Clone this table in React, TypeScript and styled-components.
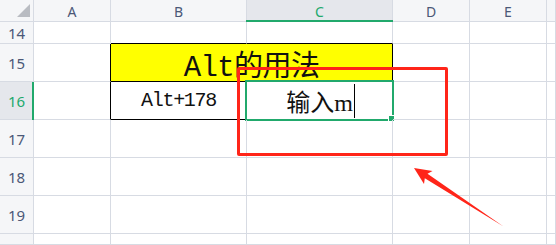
import React from "react";
import styled, { createGlobalStyle } from "styled-components";

const GRID = "#d7dbe3";
const GREEN = "#21a96c";
const RED = "#ff2519";

const GlobalStyles = createGlobalStyle`
  html, body {
    margin: 0;
    padding: 0;
    background: #ffffff;
    overflow: hidden;
  }
`;

const Sheet = styled.div`
  position: relative;
  width: 556px;
  height: 245px;
  display: grid;
  grid-template-columns: 34px 77px 136px 146px 77px 77px 1fr;
  grid-template-rows: 22px 22px 38px 38px 38px 38px 38px 1fr;
  overflow: hidden;
`;

const Cell = styled.div<{ $right?: string; $bottom?: string; $span?: number }>`
  box-sizing: border-box;
  border-right: 1px solid ${({ $right }) => $right || GRID};
  border-bottom: 1px solid ${({ $bottom }) => $bottom || GRID};
  grid-column: span ${({ $span }) => $span || 1};
  display: flex;
  align-items: center;
  justify-content: center;
  position: relative;
`;

const Head = styled(Cell)<{ $active?: boolean }>`
  background: ${({ $active }) => ($active ? "#e5e7ec" : "#f5f6f8")};
  color: ${({ $active }) => ($active ? GREEN : "#4b5877")};
  font-family: "Noto Sans", "Liberation Sans", sans-serif;
  font-size: 14px;
`;

const ColHead = styled(Head)`
  padding-top: 1px;
  &::after {
    content: "";
    display: ${({ $active }) => ($active ? "block" : "none")};
    position: absolute;
    left: -1px;
    right: -1px;
    bottom: -1px;
    height: 2px;
    background: ${GREEN};
  }
`;

const RowHead = styled(Head)`
  font-size: 15px;
  &::after {
    content: "";
    display: ${({ $active }) => ($active ? "block" : "none")};
    position: absolute;
    top: 0;
    bottom: -1px;
    right: -1px;
    width: 2px;
    background: ${GREEN};
  }
`;

const Corner = styled(Head)`
  align-items: flex-end;
  justify-content: flex-end;
  padding: 0 3px 4px 0;
`;

const Triangle = styled.div`
  width: 0;
  height: 0;
  border-left: 13px solid transparent;
  border-bottom: 13px solid #b9bcc2;
`;

const Title = styled(Cell)`
  background: #ffff00;
  font-family: "Liberation Mono", "Noto Sans CJK SC", monospace;
  font-size: 29px;
  letter-spacing: -0.6px;
  color: #111;
  padding-top: 2px;
`;

const Value = styled(Cell)`
  font-family: "Liberation Mono", "Noto Sans CJK SC", monospace;
  font-size: 20px;
  letter-spacing: -1.3px;
  color: #111;
`;

const Editing = styled(Cell)`
  font-family: "Liberation Serif", "Noto Sans CJK SC", serif;
  font-size: 24px;
  color: #111;
  padding-left: 2px;
`;

const Caret = styled.span`
  display: inline-block;
  width: 1px;
  height: 34px;
  background: #000;
  margin-left: 1px;
  vertical-align: middle;
`;

const Selection = styled.div`
  position: absolute;
  left: -2px;
  top: -2px;
  width: 149px;
  height: 41px;
  box-sizing: border-box;
  border: 2px solid ${GREEN};
  pointer-events: none;
`;

const Handle = styled.div`
  position: absolute;
  right: -3px;
  bottom: -3px;
  width: 5px;
  height: 5px;
  background: ${GREEN};
  border: 1px solid #fff;
`;

const RedBox = styled.div`
  position: absolute;
  left: 237px;
  top: 67px;
  width: 211px;
  height: 89px;
  box-sizing: border-box;
  border: 3px solid ${RED};
  border-radius: 2px;
`;

const Arrow = styled.svg`
  position: absolute;
  left: 0;
  top: 0;
`;

const cols = ["A", "B", "C", "D", "E", ""];
const rows = [14, 15, 16, 17, 18, 19, 20];

export default function App() {
  return (
    <>
      <GlobalStyles />
      <Sheet>
        <Corner>
          <Triangle />
        </Corner>
        {cols.map((c) => (
          <ColHead key={c || "f"} $active={c === "C"}>
            {c}
          </ColHead>
        ))}

        {/* row 14 */}
        <RowHead>14</RowHead>
        <Cell />
        <Cell $bottom="#000" />
        <Cell $bottom="#000" />
        <Cell />
        <Cell />
        <Cell />

        {/* row 15 */}
        <RowHead>15</RowHead>
        <Cell $right="#000" />
        <Title $span={2} $right="#000" $bottom="#000">
          Alt的用法
        </Title>
        <Cell />
        <Cell />
        <Cell />

        {/* row 16 */}
        <RowHead $active>16</RowHead>
        <Cell $right="#000" />
        <Value $right="#000" $bottom="#000">
          Alt+178
        </Value>
        <Editing $right="#000" $bottom="#000">
          输入m
          <Caret />
          <Selection>
            <Handle />
          </Selection>
        </Editing>
        <Cell />
        <Cell />
        <Cell />

        {rows.slice(3).map((r) => (
          <React.Fragment key={r}>
            <RowHead>{r === 20 ? "" : r}</RowHead>
            <Cell />
            <Cell />
            <Cell />
            <Cell />
            <Cell />
            <Cell />
          </React.Fragment>
        ))}

        <RedBox />
        <Arrow width="556" height="245" viewBox="0 0 556 245">
          <polygon
            points="414,168 432.5,171 427.5,173.8 503.5,226.6 424.8,178.2 424,184"
            fill={RED}
          />
        </Arrow>
      </Sheet>
    </>
  );
}
